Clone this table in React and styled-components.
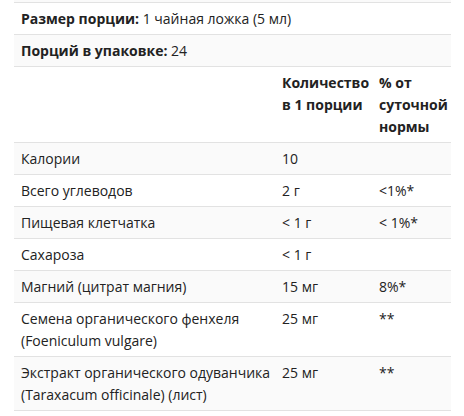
import React from 'react';
import styled, { createGlobalStyle } from 'styled-components';

const GlobalStyle = createGlobalStyle`
  body {
    margin: 0;
    background: #fff;
    font-family: "Open Sans", "Noto Sans", sans-serif;
    color: #222;
  }
`;

const Wrapper = styled.div`
  padding: 0 13px 0 14px;
`;

const Table = styled.table`
  width: 100%;
  border-collapse: collapse;
  table-layout: fixed;
  font-size: 14px;
  line-height: 22px;
`;

const Row = styled.tr`
  background: ${(p) => (p.$shade ? '#fafafa' : '#fff')};
  border-bottom: 1px solid #e2e2e2;
`;

const Stub = styled.td`
  height: 2px;
  padding: 0;
`;

const Cell = styled.td`
  padding: 5px 3px 4px 7px;
  vertical-align: top;
  text-align: left;
`;

const HeadCell = styled.th`
  padding: 5px 3px 4px 7px;
  vertical-align: top;
  text-align: left;
  font-weight: 700;
`;

const Label = styled.strong`
  font-weight: 700;
`;

const rows = [
  { name: 'Калории', amount: '10', dv: '' },
  { name: 'Всего углеводов', amount: '2 г', dv: '<1%*' },
  { name: 'Пищевая клетчатка', amount: '< 1 г', dv: '< 1%*' },
  { name: 'Сахароза', amount: '< 1 г', dv: '' },
  { name: 'Магний (цитрат магния)', amount: '15 мг', dv: '8%*' },
  { name: 'Семена органического фенхеля (Foeniculum vulgare)', amount: '25 мг', dv: '**' },
  { name: 'Экстракт органического одуванчика (Taraxacum officinale) (лист)', amount: '25 мг', dv: '**' },
];

export default function App() {
  return (
    <>
      <GlobalStyle />
      <Wrapper>
        <Table>
          <colgroup>
            <col style={{ width: 261 }} />
            <col style={{ width: 97 }} />
            <col />
          </colgroup>
          <tbody>
            <Row $shade>
              <Stub colSpan={3} />
            </Row>
            <Row>
              <Cell colSpan={3}>
                <Label>Размер порции:</Label> 1 чайная ложка (5 мл)
              </Cell>
            </Row>
            <Row $shade>
              <Cell colSpan={3}>
                <Label>Порций в упаковке:</Label> 24
              </Cell>
            </Row>
            <Row>
              <HeadCell />
              <HeadCell>Количество в 1 порции</HeadCell>
              <HeadCell>% от суточной нормы</HeadCell>
            </Row>
            {rows.map((r, i) => (
              <Row $shade={i % 2 === 0} key={r.name}>
                <Cell>{r.name}</Cell>
                <Cell>{r.amount}</Cell>
                <Cell>{r.dv}</Cell>
              </Row>
            ))}
          </tbody>
        </Table>
      </Wrapper>
    </>
  );
}
